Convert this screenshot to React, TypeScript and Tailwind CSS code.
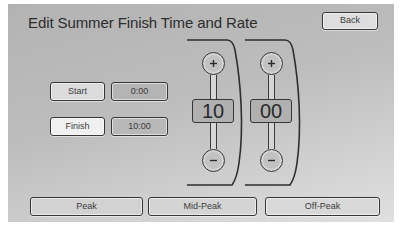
import React from "react";

const font = { fontFamily: '"Liberation Sans", Arial, sans-serif' };

function Btn({ label, className }: { label: string; className: string }) {
  return (
    <div
      className={`flex items-center justify-center rounded-[3px] border-[1.5px] border-[#363636] text-[9px] text-[#3c3c3c] shadow-[inset_0_0_0_1px_rgba(255,255,255,0.55),0_1px_0_rgba(255,255,255,0.5)] ${className}`}
    >
      {label}
    </div>
  );
}

function Bracket() {
  return (
    <svg className="absolute left-0 top-0" width="60" height="152" viewBox="0 0 60 152" fill="none">
      <path
        d="M0 2 H40 Q46 2 48 12 C54 45 57 90 52 125 Q50 140 45 147 H0"
        stroke="#2e2e2e"
        strokeWidth="1.6"
      />
    </svg>
  );
}

function Circle({ sign }: { sign: "+" | "-" }) {
  return (
    <div className="flex h-[23px] w-[23px] items-center justify-center rounded-full border-[1.5px] border-[#3a3a3a] bg-[#c2c2c2] shadow-[inset_0_0_0_2px_#d4d4d4]">
      <svg width="9" height="9" viewBox="0 0 9 9">
        <path d="M1 4.5 H8" stroke="#2a2a2a" strokeWidth="1.4" />
        {sign === "+" && <path d="M4.5 1 V8" stroke="#2a2a2a" strokeWidth="1.4" />}
      </svg>
    </div>
  );
}

function Spinner({ value }: { value: string }) {
  return (
    <div className="relative h-[152px] w-[58px] shrink-0">
      <Bracket />
      <div className="flex w-[52px] flex-col items-center pt-[14px]">
        <Circle sign="+" />
        <div className="h-[24px] w-[7px] border-x-[1.5px] border-[#3a3a3a] bg-[#d6d6d6]" />
        <div className="flex h-[24px] w-[42px] items-center justify-center rounded-[3px] border-[1.5px] border-[#363636] bg-[#b0b0b0] text-[20px] leading-none text-[#2a2a2a]">
          {value}
        </div>
        <div className="h-[26px] w-[7px] border-x-[1.5px] border-[#3a3a3a] bg-[#d6d6d6]" />
        <Circle sign="-" />
      </div>
    </div>
  );
}

export default function App() {
  return (
    <div className="h-[226px] w-[401px] bg-white pl-[8px] pt-[4px]" style={font}>
      <div className="flex h-[218px] w-[386px] flex-col bg-[linear-gradient(165deg,#b3b3b3_0%,#bdbdbd_45%,#e0e0e0_100%)]">
        <div className="flex h-[34px] items-start">
          <div className="ml-[20px] mt-[10px] text-[15px] leading-[18px] tracking-[-0.1px] text-[#2c2c2c]">
            Edit Summer Finish Time and Rate
          </div>
          <Btn label="Back" className="ml-auto mr-[16px] mt-[8px] h-[18px] w-[56px] bg-[#dedede]" />
        </div>
        <div className="flex h-[152px]">
          <div className="flex w-[179px] shrink-0 flex-col gap-[16px] pl-[42px] pt-[44px]">
            <div className="flex gap-[6px]">
              <Btn label="Start" className="h-[19px] w-[55px] bg-[#dcdcdc]" />
              <Btn label="0:00" className="h-[19px] w-[57px] bg-[#b4b4b4]" />
            </div>
            <div className="flex gap-[6px]">
              <Btn label="Finish" className="h-[19px] w-[55px] bg-[#f0f0f0]" />
              <Btn label="10:00" className="h-[19px] w-[57px] bg-[#b8b8b8]" />
            </div>
          </div>
          <Spinner value="10" />
          <Spinner value="00" />
        </div>
        <div className="mt-[7px] flex pl-[22px]">
          <Btn label="Peak" className="h-[19px] w-[113px] bg-[#d2d2d2]" />
          <Btn label="Mid-Peak" className="ml-[5px] h-[19px] w-[109px] bg-[#d4d4d4]" />
          <Btn label="Off-Peak" className="ml-[8px] h-[19px] w-[115px] bg-[#d8d8d8]" />
        </div>
      </div>
    </div>
  );
}
